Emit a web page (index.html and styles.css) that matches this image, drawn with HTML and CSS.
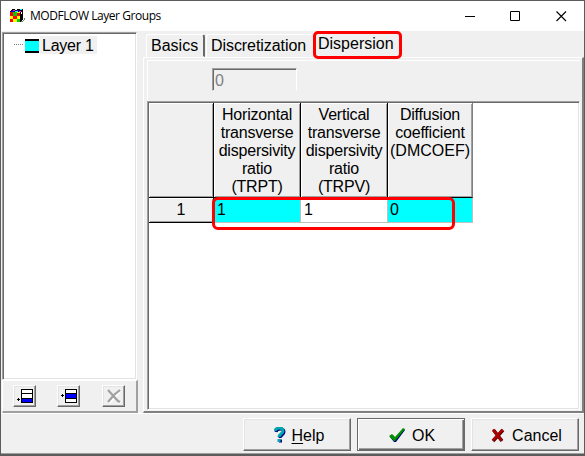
FILE: index.html
```html
<!DOCTYPE html>
<html lang="en">
<head>
<meta charset="utf-8">
<title>MODFLOW Layer Groups</title>
<link rel="stylesheet" href="styles.css">
</head>
<body>
<div class="window">
  <header class="titlebar">
    <svg class="app-icon" width="16" height="14" viewBox="0 0 16 14" shape-rendering="crispEdges">
      <path fill="#000" d="M2 0h11v10l-2 3H0V3z"/>
      <path fill="#ff0" d="M0 3h10v10H0z"/>
      <path fill="#f00" d="M0 3h3v4H0zM7 4h3v3H7zM3 7h4v3H3zM0 10h3v3H0z"/>
      <path fill="#0c0" d="M3 3h4v4H3zM7 10h3v3H7z"/>
      <path fill="#00f" d="M1 2h3v1H1zM7 1h2v1H7z"/>
      <path fill="#f0f" d="M3 1h2v1H3zM9 2h2v1H9z"/>
      <path fill="#0ff" d="M5 2h3v1H5zM10 0h2v1h-2z"/>
      <path fill="#fff" d="M5 0h2v1H5zM11 3h1v2h-1z"/>
      <path stroke="#777" fill="none" d="M11 12.500h2M13 11.500h1M14 10.500h1M14.500 9v1"/>
    </svg>
    <h1>MODFLOW Layer Groups</h1>
    <svg class="controls" width="102" height="12" viewBox="0 0 102 12" fill="none" stroke="#000">
      <path d="M0 6.500h10M45.500 1.500h9v9h-9z"/>
      <path d="M91.500 1.500l9.500 9.500M101 1.500L91.500 11" stroke-width="1.1"/>
    </svg>
  </header>
  <main>
    <aside>
      <div class="tree">
        <span class="dots"></span><span class="layer-icon"></span><span class="node">Layer 1</span>
      </div>
      <div class="toolbar">
        <button class="tool"><svg width="16" height="14" viewBox="0 0 16 14" shape-rendering="crispEdges"><path fill="#000" d="M4 0h12v14H4zM0 10h3v1H0zM1 9h1v3H1z"/><path fill="#fff" d="M5 1h10v3H5zM5 5h10v4H5z"/><path fill="#00f" d="M5 10h10v3H5z"/></svg></button>
        <button class="tool"><svg width="16" height="14" viewBox="0 0 16 14" shape-rendering="crispEdges"><path fill="#000" d="M4 0h12v14H4zM0 6h3v1H0zM1 5h1v3H1z"/><path fill="#fff" d="M5 1h10v3H5zM5 10h10v3H5z"/><path fill="#00f" d="M5 5h10v4H5z"/></svg></button>
        <button class="tool"><svg width="16" height="15" viewBox="0 0 16 15" fill="none"><path stroke="#fff" stroke-width="2" d="M3 2l11 12M14 3L3 14"/><path stroke="#a0a0a0" stroke-width="2.200" d="M2 1l10 11 2 1M14 1L8 6l-6 7"/></svg></button>
      </div>
    </aside>
    <section class="pages">
      <nav>
        <span class="tab basics">Basics</span><span class="tab disc">Discretization</span><span class="tab active">Dispersion</span>
      </nav>
      <div class="page">
        <div class="edit-panel"><div class="edit">0</div></div>
        <div class="grid-box">
          <table>
            <colgroup><col class="c0"><col class="c1"><col class="c1"><col class="c3"></colgroup>
            <tr><th></th><th>Horizontal<br>transverse<br>dispersivity<br>ratio<br>(TRPT)</th><th>Vertical<br>transverse<br>dispersivity<br>ratio<br>(TRPV)</th><th class="last">Diffusion<br>coefficient<br><span class="wide">(DMCOEF)</span></th></tr>
            <tr><td class="row-head">1</td><td class="cyan">1</td><td>1</td><td class="cyan last">0</td></tr>
          </table>
          <div class="mark"></div>
        </div>
      </div>
    </section>
  </main>
  <footer>
    <button class="cmd help"><svg width="12" height="16" viewBox="0 0 12 16" fill="none"><path stroke="#000080" stroke-width="3" d="M2 5c1-4 8-4 8 0 0 3-4 3-4 6M5 14h3"/><path stroke="#00a5ad" stroke-width="3" d="M1 4c1-4 8-4 8 0 0 3-4 3-4 6M3.500 13.500h3"/></svg><span><u>H</u>elp</span></button>
    <button class="cmd default"><svg width="17" height="15" viewBox="0 0 17 15"><path fill="#000080" d="M1 9l3-2 2 3 9-9 1 1-9 12H5z"/><path fill="#009000" d="M0 8l3-2 3 3 8-9 2 1-10 12H5z"/></svg><span>OK</span></button>
    <button class="cmd cancel"><svg width="14" height="15" viewBox="0 0 14 15" fill="none"><path stroke="#500000" stroke-width="3.500" d="M2.500 2l8.500 11M12 2L2 13"/><path stroke="#b00000" stroke-width="2.500" d="M2 1.500l8.500 11M11.500 1.500L2 12.500"/></svg><span>Cancel</span></button>
  </footer>
</div>
</body>
</html>
```
FILE: styles.css
```css
* { box-sizing: border-box; }
body {
  margin: 0;
  width: 585px;
  height: 456px;
  overflow: hidden;
  background: #5c5c5c;
  font: 16px/18px "Liberation Sans", Arial, sans-serif;
  color: #000;
}
.window {
  width: 583px;
  height: 453px;
  margin: 1px 1px 2px;
  background: #f0f0f0;
  display: flex;
  flex-direction: column;
}
.titlebar {
  height: 30px;
  flex: none;
  background: #fff;
  display: flex;
  align-items: center;
  padding-left: 9px;
}
.app-icon { margin-right: 4px; }
h1 {
  margin: 0;
  font: 12px/16px "Open Sans", sans-serif;
  letter-spacing: -0.45px;
  white-space: nowrap;
}
.controls { margin-left: auto; margin-right: 17px; }
main { display: flex; height: 382px; flex: none; }
aside {
  width: 137px;
  flex: none;
  padding: 1px 0 0 1px;
  display: flex;
  flex-direction: column;
}
.tree {
  height: 348px;
  margin-right: 1px;
  background: #fff;
  border: 1px solid;
  border-color: #a0a0a0 #fff #fff #a0a0a0;
  box-shadow: inset 1px 1px #696969, inset -1px -1px #e3e3e3;
  padding: 3px 0 0 11px;
  display: flex;
  align-items: flex-start;
}
.dots { width: 9px; margin: 8px 2px 0 0; border-top: 1px dotted #808080; }
.layer-icon {
  width: 14px;
  height: 14px;
  background: #0ff;
  border: solid #000;
  border-width: 2px 0;
  margin: 3px 1px 0 0;
}
.node {
  background: #f0f0f0;
  height: 18px;
  padding: 0 3px 0 2px;
  line-height: 19px;
  letter-spacing: -0.25px;
  white-space: nowrap;
}
.toolbar {
  height: 33px;
  border: solid;
  border-width: 1px 2px 2px 1px;
  border-color: #fff #a0a0a0 #a0a0a0 #fff;
  padding: 4px 0 0 10px;
  display: flex;
  gap: 21px;
}
button {
  background: #f0f0f0;
  font: inherit;
  color: inherit;
  border: 1px solid;
  border-color: #fff #696969 #696969 #fff;
  box-shadow: inset -1px -1px #a0a0a0, inset 1px 1px #e3e3e3;
  padding: 0;
}
.tool {
  width: 23px;
  height: 22px;
  flex: none;
  display: flex;
  align-items: center;
  padding-left: 3px;
}
.tool + .tool + .tool { margin-left: 1px; }
.pages { flex: 1; padding: 1px 0 0 5px; }
nav { height: 25px; display: flex; align-items: flex-end; padding-left: 3px; }
.tab {
  height: 23px;
  border: 1px solid;
  border-color: #fff transparent transparent #fff;
  border-radius: 3px 3px 0 0;
  padding: 2px 0 0 4px;
  white-space: nowrap;
}
.basics { width: 59px; border-right: 2px solid #696969; }
.disc { width: 107px; margin-left: 1px; letter-spacing: -0.07px; }
.active {
  height: 28px;
  width: 89px;
  align-self: flex-start;
  margin-top: -1px;
  border: 3px solid #f00;
  border-radius: 5px;
  padding: 0 0 0 2px;
  line-height: 20px;
  background: #f0f0f0;
  position: relative;
}
.page {
  height: 356px;
  border: solid;
  border-width: 1px 2px 2px 1px;
  border-color: #fff #808080 #808080 #fff;
  padding: 2px 2px 2px 3px;
}
.edit-panel {
  height: 41px;
  border: solid #fff;
  border-width: 1px 0 0 1px;
  padding: 7px 0 0 64px;
}
.edit {
  width: 85px;
  height: 23px;
  border: 1px solid;
  border-color: #a0a0a0 #fff #f0f0f0 #a0a0a0;
  box-shadow: inset 1px 1px #696969;
  color: #808080;
  padding: 3px 2px 0;
}
.grid-box {
  position: relative;
  height: 309px;
  background: #fff;
  border: 1px solid;
  border-color: #a0a0a0 #fff #fff #a0a0a0;
  box-shadow: inset 1px 1px #696969, inset -1px -1px #e3e3e3;
  padding: 1px;
}
table { border-collapse: separate; border-spacing: 0; table-layout: fixed; width: 324px; }
.c0 { width: 65px; }
.c1 { width: 87px; }
.c3 { width: 85px; }
th {
  height: 95px;
  padding: 3px 0 0;
  background: #f0f0f0;
  border: solid #000;
  border-width: 0 1px 1px 0;
  box-shadow: inset 1px 1px #fff, inset -1px -1px #a0a0a0;
  font-weight: normal;
  letter-spacing: -0.2px;
  vertical-align: top;
  white-space: nowrap;
}
th.last { border-right-color: #808080; }
.wide { letter-spacing: 0; }
td {
  height: 25px;
  padding: 3px 0 0 3px;
  border: solid #c0c0c0;
  border-width: 0 1px 1px 0;
  vertical-align: top;
}
td.last { padding-left: 2px; }
td.row-head {
  background: #f0f0f0;
  border-color: #000;
  padding-left: 0;
  text-align: center;
  box-shadow: inset 1px 1px #fff, inset -1px -1px #a0a0a0;
}
.cyan { background: #0ff; }
.mark {
  position: absolute;
  left: 64px;
  top: 95px;
  width: 243px;
  height: 33px;
  border: 3px solid #f00;
  border-radius: 6px;
}
footer {
  flex: 1;
  border-top: 1px solid #fff;
  border-bottom: 1px solid #a0a0a0;
  display: flex;
  justify-content: flex-end;
  gap: 6px;
  padding: 4px 5px 0 0;
}
.cmd {
  width: 108px;
  height: 33px;
  display: flex;
  align-items: center;
  justify-content: center;
  gap: 6px;
  padding-top: 2px;
}
.cmd svg { margin-top: -1px; }
.help { padding-left: 4px; }
.cancel { gap: 7px; padding-left: 3px; }
.default {
  padding-left: 2px;
  border-color: #696969;
  box-shadow: inset 1px 1px #fff, inset -1px -1px #696969, inset -2px -2px #a0a0a0;
}
u { text-underline-offset: 2px; }
```
